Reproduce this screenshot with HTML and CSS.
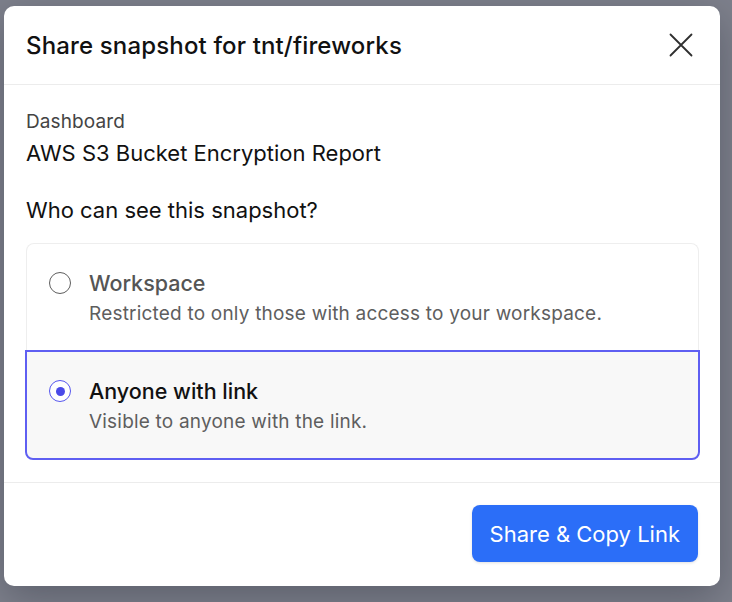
FILE: index.html
```html
<!DOCTYPE html>
<html>
<head>
<meta charset="utf-8">
<link rel="stylesheet" href="styles.css">
</head>
<body>
<div class="backdrop">
  <div class="modal">
    <div class="modal-header">
      <h1 class="modal-title">Share snapshot for tnt/fireworks</h1>
      <button class="close-btn" aria-label="Close">
        <svg width="24" height="24" viewBox="0 0 24 24"><path d="M1.5 1.5 L22.5 22.5 M22.5 1.5 L1.5 22.5" stroke="#2f2f2f" stroke-width="1.8" stroke-linecap="round" fill="none"/></svg>
      </button>
    </div>
    <div class="modal-body">
      <div class="label">Dashboard</div>
      <div class="dash-name">AWS S3 Bucket Encryption Report</div>
      <div class="question">Who can see this snapshot?</div>
      <div class="options">
        <div class="option">
          <span class="radio"></span>
          <div class="option-text">
            <div class="option-title">Workspace</div>
            <div class="option-desc">Restricted to only those with access to your workspace.</div>
          </div>
        </div>
        <div class="option selected">
          <span class="radio checked"></span>
          <div class="option-text">
            <div class="option-title">Anyone with link</div>
            <div class="option-desc">Visible to anyone with the link.</div>
          </div>
        </div>
      </div>
    </div>
    <div class="modal-footer">
      <button class="primary-btn">Share &amp; Copy Link</button>
    </div>
  </div>
</div>
</body>
</html>
```
FILE: styles.css
```css
html, body {
  margin: 0;
  padding: 0;
  height: 100%;
}
body {
  background: #7e818c;
  font-family: Inter, "Noto Sans", sans-serif;
  overflow: hidden;
}
.backdrop {
  padding: 6px 12px 0 4px;
}
.modal {
  width: 716px;
  height: 580px;
  background: #fff;
  border-radius: 10px;
  box-shadow: 0 12px 40px rgba(30, 32, 45, 0.35);
  display: flex;
  flex-direction: column;
}
.modal-header {
  height: 78px;
  flex-shrink: 0;
  border-bottom: 1px solid #ececec;
  display: flex;
  align-items: center;
  justify-content: space-between;
  padding: 0 27px 0 22px;
}
.modal-title {
  margin: 0;
  font-size: 24px;
  font-weight: 500;
  color: #111;
  letter-spacing: 0.15px;
}
.close-btn {
  border: 0;
  background: none;
  padding: 0;
  width: 24px;
  height: 24px;
  display: flex;
}
.modal-body {
  padding: 25px 21px 0 22px;
  flex: 1;
}
.label {
  font-size: 19px;
  line-height: 24px;
  color: #444;
  letter-spacing: 0.1px;
}
.dash-name {
  font-size: 22px;
  line-height: 28px;
  margin-top: 5px;
  color: #111;
}
.question {
  font-size: 22px;
  line-height: 28px;
  margin-top: 29px;
  color: #111;
}
.options {
  margin-top: 19px;
  border-radius: 8px;
}
.option {
  display: flex;
  align-items: flex-start;
  gap: 18px;
  padding: 24px 22px 23px 22px;
  border: 1px solid #eeeeee;
  border-radius: 8px 8px 0 0;
  border-bottom: 0;
}
.option.selected {
  border: 2px solid #5f5ff2;
  border-radius: 0 0 8px 8px;
  background: #f8f8f8;
  padding: 24px 22px 23px 22px;
  margin: 0 -1px;
}
.radio {
  width: 20px;
  height: 20px;
  border: 1.3px solid #5e5e5e;
  border-radius: 50%;
  margin-top: 4px;
  flex-shrink: 0;
  box-sizing: content-box;
  display: flex;
  align-items: center;
  justify-content: center;
  background: #fff;
}
.radio.checked {
  border-color: #5656ee;
}
.radio.checked::after {
  content: "";
  width: 9px;
  height: 9px;
  border-radius: 50%;
  background: #4a4ae8;
}
.option-title {
  font-size: 21.5px;
  line-height: 30px;
  font-weight: 500;
  color: #555;
}
.selected .option-title {
  color: #111;
}
.option-desc {
  font-size: 19px;
  line-height: 26px;
  margin-top: 3px;
  color: #5e5e5e;
  letter-spacing: 0.2px;
}
.modal-footer {
  border-top: 1px solid #ececec;
  height: 104px;
  flex-shrink: 0;
  display: flex;
  justify-content: flex-end;
  align-items: flex-start;
  padding: 22px 22px 0 0;
  box-sizing: border-box;
}
.primary-btn {
  border: 0;
  background: #2b6ef8;
  color: #fff;
  font-family: Inter, "Noto Sans", sans-serif;
  font-size: 22px;
  height: 57px;
  padding: 0 18px;
  border-radius: 8px;
  box-shadow: 0 1px 3px rgba(0,0,0,0.12);
}
```
